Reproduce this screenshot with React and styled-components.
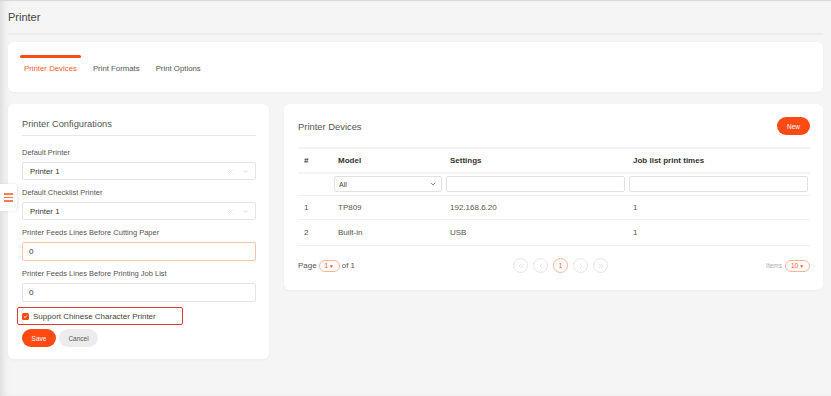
import React from 'react';
import styled, { createGlobalStyle } from 'styled-components';
import { X, ChevronDown, ChevronsLeft, ChevronLeft, ChevronRight, ChevronsRight } from 'lucide-react';

const ORANGE = '#ff4a14';

const GlobalStyle = createGlobalStyle`
  html, body { margin: 0; padding: 0; }
  body {
    background: #f5f5f5;
    font-family: 'Liberation Sans', Arial, sans-serif;
    color: #555;
  }
  * { box-sizing: border-box; }
`;

const Page = styled.div`
  position: relative;
  min-height: 396px;
  padding: 0 8px;
  border-top: 1px solid #d8d8d8;
  box-shadow: inset 7px 0 8px -5px rgba(0, 0, 0, 0.12);
`;

const PageHeader = styled.div`
  height: 34px;
  display: flex;
  align-items: center;
  font-size: 11px;
  color: #444;
  border-bottom: 2px solid #ececec;
  margin-bottom: 7px;
`;

const Card = styled.div`
  background: #fff;
  border-radius: 6px;
  box-shadow: 0 1px 3px rgba(0, 0, 0, 0.04);
`;

const TabsCard = styled(Card)`
  height: 50px;
  padding: 13px 12px 0;
  display: flex;
  gap: 8px;
  margin-bottom: 12px;
`;

const Tab = styled.div`
  display: flex;
  flex-direction: column;
  padding: 0 0;
  font-size: 7.8px;
  color: ${(p) => (p.active ? '#ff5a2c' : '#555')};
`;

const TabBar = styled.span`
  height: 2.5px;
  border-radius: 2px;
  background: ${(p) => (p.active ? ORANGE : 'transparent')};
  margin-bottom: 6px;
`;

const TabLabel = styled.span`
  padding: 0 4px;
  line-height: 10px;
`;

const Columns = styled.div`
  display: grid;
  grid-template-columns: 261px 1fr;
  gap: 15px;
  align-items: start;
`;

const LeftCard = styled(Card)`
  padding: 13px 13px 12px 14px;
`;

const SectionTitle = styled.div`
  font-size: 9.3px;
  line-height: 14px;
  color: #555;
  padding-bottom: 4px;
  border-bottom: 1px solid #e8e8e8;
  margin-bottom: 12px;
`;

const Field = styled.div`
  margin-bottom: 8px;
`;

const Label = styled.div`
  font-size: 7.5px;
  line-height: 10px;
  color: #555;
  margin-bottom: 4px;
`;

const SelectBox = styled.div`
  height: 18px;
  border: 1px solid #e4e4e4;
  border-radius: 2px;
  padding: 0 6px 0 7px;
  display: flex;
  align-items: center;
  font-size: 7.8px;
  color: #333;
`;

const SelectIcons = styled.div`
  margin-left: auto;
  display: flex;
  align-items: center;
  gap: 8px;
  color: #c4c4c4;
`;

const TextInput = styled.div`
  height: 19px;
  border: 1px solid ${(p) => (p.focused ? '#ffc2ad' : '#e4e4e4')};
  border-radius: 2px;
  padding: 0 6px;
  display: flex;
  align-items: center;
  font-size: 8px;
  color: #333;
`;

const CheckRow = styled.div`
  margin: 5px 0 0 -5px;
  width: 166px;
  height: 18px;
  border: 1px solid #e53935;
  border-radius: 2px;
  padding-left: 4px;
  display: flex;
  align-items: center;
  gap: 4px;
  font-size: 8px;
  color: #444;
`;

const CheckBox = styled.span`
  width: 7px;
  height: 7px;
  border-radius: 1.5px;
  background: ${ORANGE};
  display: flex;
  align-items: center;
  justify-content: center;
`;

const ButtonRow = styled.div`
  display: flex;
  gap: 3px;
  margin-top: 4px;
`;

const PillButton = styled.button`
  height: 18px;
  width: ${(p) => p.w}px;
  border: none;
  border-radius: 9px;
  padding: 0;
  font-family: inherit;
  font-size: 6.5px;
  background: ${(p) => (p.primary ? ORANGE : '#ececec')};
  color: ${(p) => (p.primary ? '#fff' : '#555')};
`;

const RightCard = styled(Card)`
  padding: 13px 13px 17px 14px;
`;

const CardHead = styled.div`
  display: flex;
  align-items: center;
  justify-content: space-between;
  height: 18px;
  font-size: 9.4px;
  color: #555;
`;

const Table = styled.table`
  width: 100%;
  margin-top: 12px;
  border-collapse: collapse;
  table-layout: fixed;
`;

const Th = styled.th`
  height: 25px;
  padding: 0 6px;
  text-align: left;
  font-size: 8px;
  font-weight: bold;
  color: #333;
  border-top: 2px solid #f4f4f4;
  border-bottom: 2px solid #f4f4f4;
`;

const FilterCell = styled.td`
  height: 22px;
  padding: 0 2px;
  border-bottom: 1px solid #efefef;
`;

const FilterBox = styled.div`
  height: 16px;
  border: 1px solid #e2e2e2;
  border-radius: 2px;
  padding: 0 4px;
  display: flex;
  align-items: center;
  justify-content: space-between;
  font-size: 7px;
  color: #444;
`;

const Td = styled.td`
  height: ${(p) => p.h || 25}px;
  padding: 0 6px;
  font-size: 8px;
  color: #555;
  border-bottom: 1px solid #f0f0f0;
`;

const Pagination = styled.div`
  margin-top: 13px;
  height: 14px;
  display: flex;
  align-items: center;
  justify-content: space-between;
  font-size: 8px;
  color: #555;
`;

const PageInfo = styled.div`
  display: flex;
  align-items: center;
  gap: 2px;
`;

const Pill = styled.span`
  height: 12px;
  width: ${(p) => p.w}px;
  border: 1px solid #ffb398;
  border-radius: 6px;
  display: inline-flex;
  align-items: center;
  justify-content: center;
  gap: 1px;
  font-size: 6.5px;
  color: #ff5a2c;
`;

const Caret = styled.span`
  font-size: 5px;
`;

const Pager = styled.div`
  display: flex;
  gap: 5px;
`;

const PagerBtn = styled.span`
  width: 15px;
  height: 15px;
  border-radius: 50%;
  border: 1px solid ${(p) => (p.active ? '#ffb398' : '#e6e6e6')};
  color: ${(p) => (p.active ? '#ff5a2c' : '#d4d4d4')};
  display: flex;
  align-items: center;
  justify-content: center;
  font-size: 6.5px;
`;

const ItemsWrap = styled.div`
  display: flex;
  align-items: center;
  gap: 3px;
  font-size: 6.5px;
  color: #aaa;
`;

const MenuTab = styled.div`
  position: absolute;
  left: 0;
  top: 183px;
  width: 17px;
  height: 27px;
  background: #fff;
  border-radius: 0 3px 3px 0;
  box-shadow: 1px 0 3px rgba(0, 0, 0, 0.1);
  display: flex;
  flex-direction: column;
  justify-content: center;
  align-items: center;
  gap: 2.4px;
`;

const MenuLine = styled.span`
  width: 9px;
  height: 1.2px;
  background: #ff7b50;
`;

function Select({ value }) {
  return (
    <SelectBox>
      {value}
      <SelectIcons>
        <X size={7} strokeWidth={1.5} />
        <ChevronDown size={7} strokeWidth={2} />
      </SelectIcons>
    </SelectBox>
  );
}

const rows = [
  { id: 1, model: 'TP809', settings: '192.168.6.20', times: 1, h: 24 },
  { id: 2, model: 'Built-in', settings: 'USB', times: 1, h: 26 },
];

export default function App() {
  return (
    <>
      <GlobalStyle />
      <Page>
        <PageHeader>Printer</PageHeader>

        <TabsCard>
          {['Printer Devices', 'Print Formats', 'Print Options'].map((t, i) => (
            <Tab key={t} active={i === 0}>
              <TabBar active={i === 0} />
              <TabLabel>{t}</TabLabel>
            </Tab>
          ))}
        </TabsCard>

        <Columns>
          <LeftCard>
            <SectionTitle>Printer Configurations</SectionTitle>
            <Field>
              <Label>Default Printer</Label>
              <Select value="Printer 1" />
            </Field>
            <Field>
              <Label>Default Checklist Printer</Label>
              <Select value="Printer 1" />
            </Field>
            <Field>
              <Label>Printer Feeds Lines Before Cutting Paper</Label>
              <TextInput focused>0</TextInput>
            </Field>
            <Field style={{ marginBottom: 0 }}>
              <Label>Printer Feeds Lines Before Printing Job List</Label>
              <TextInput>0</TextInput>
            </Field>
            <CheckRow>
              <CheckBox>
                <svg width="5" height="5" viewBox="0 0 10 10">
                  <path d="M2 5.2 L4.2 7.2 L8 2.8" fill="none" stroke="#fff" strokeWidth="1.8" />
                </svg>
              </CheckBox>
              Support Chinese Character Printer
            </CheckRow>
            <ButtonRow>
              <PillButton primary w={34}>Save</PillButton>
              <PillButton w={39}>Cancel</PillButton>
            </ButtonRow>
          </LeftCard>

          <RightCard>
            <CardHead>
              Printer Devices
              <PillButton primary w={33}>New</PillButton>
            </CardHead>
            <Table>
              <colgroup>
                <col style={{ width: 34 }} />
                <col style={{ width: 112 }} />
                <col style={{ width: 183 }} />
                <col />
              </colgroup>
              <thead>
                <tr>
                  <Th>#</Th>
                  <Th>Model</Th>
                  <Th>Settings</Th>
                  <Th>Job list print times</Th>
                </tr>
              </thead>
              <tbody>
                <tr>
                  <FilterCell />
                  <FilterCell>
                    <FilterBox>
                      All
                      <ChevronDown size={8} strokeWidth={2} color="#555" />
                    </FilterBox>
                  </FilterCell>
                  <FilterCell><FilterBox /></FilterCell>
                  <FilterCell><FilterBox /></FilterCell>
                </tr>
                {rows.map((r) => (
                  <tr key={r.id}>
                    <Td h={r.h}>{r.id}</Td>
                    <Td h={r.h}>{r.model}</Td>
                    <Td h={r.h}>{r.settings}</Td>
                    <Td h={r.h}>{r.times}</Td>
                  </tr>
                ))}
              </tbody>
            </Table>
            <Pagination>
              <PageInfo>
                Page <Pill w={21}>1 <Caret>▼</Caret></Pill> of 1
              </PageInfo>
              <Pager>
                <PagerBtn><ChevronsLeft size={8} strokeWidth={2} /></PagerBtn>
                <PagerBtn><ChevronLeft size={8} strokeWidth={2} /></PagerBtn>
                <PagerBtn active>1</PagerBtn>
                <PagerBtn><ChevronRight size={8} strokeWidth={2} /></PagerBtn>
                <PagerBtn><ChevronsRight size={8} strokeWidth={2} /></PagerBtn>
              </Pager>
              <ItemsWrap>
                Items <Pill w={25}>10 <Caret>▼</Caret></Pill>
              </ItemsWrap>
            </Pagination>
          </RightCard>
        </Columns>

        <MenuTab>
          <MenuLine />
          <MenuLine />
          <MenuLine />
        </MenuTab>
      </Page>
    </>
  );
}
